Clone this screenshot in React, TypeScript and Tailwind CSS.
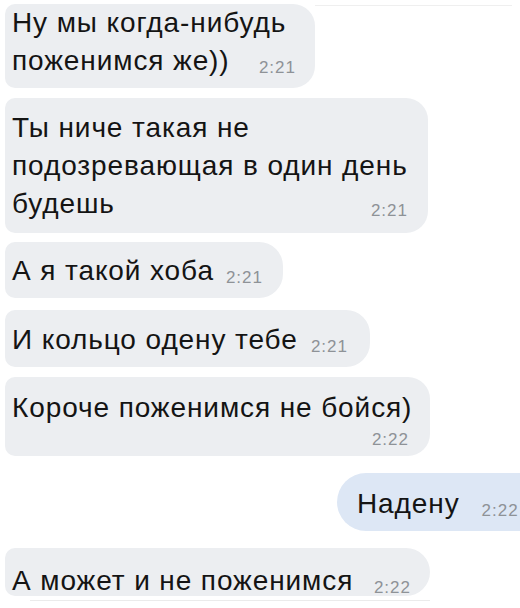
import React from "react";

const Time = ({ t, className = "" }: { t: string; className?: string }) => (
  <span
    className={
      "text-[17px] leading-[20px] tracking-[1px] text-[#8e9297] translate-y-[3px] whitespace-nowrap " +
      className
    }
  >
    {t}
  </span>
);

export default function App() {
  return (
    <div className="w-[520px] h-[608px] overflow-hidden bg-white flex flex-col items-start font-['Liberation_Sans',Arial,sans-serif] text-[28px] leading-[38px] tracking-[0.9px] text-[#141414]">
      {/* bubble 1 */}
      <div className="flex w-full items-start mt-[4px]">
        <div className="ml-[5px] w-[310px] h-[84px] bg-[#eceef1] rounded-r-[22px] rounded-l-[10px] pl-[7px] pr-[19px] pt-0 pb-[8px] whitespace-nowrap">
          <div>Ну мы когда-нибудь</div>
          <div className="flex items-baseline justify-between">
            <span>поженимся же))</span>
            <Time t="2:21" />
          </div>
        </div>
        <div className="flex-1 h-px bg-[#efefef] mt-[1px] mr-[8px]" />
      </div>

      {/* bubble 2 */}
      <div className="mt-[10px] ml-[5px] w-[423px] bg-[#eceef1] rounded-r-[22px] rounded-l-[10px] pl-[7px] pr-[20px] pt-[11px] pb-[10px] whitespace-nowrap">
        <div>Ты ниче такая не</div>
        <div>подозревающая в один день</div>
        <div className="flex items-baseline justify-between">
          <span>будешь</span>
          <Time t="2:21" />
        </div>
      </div>

      {/* bubble 3 */}
      <div className="mt-[9px] ml-[5px] w-[278px] bg-[#eceef1] rounded-r-[24px] rounded-l-[10px] pl-[7px] pr-[20px] pt-[10px] pb-[8px] whitespace-nowrap flex items-baseline justify-between">
        <span>А я такой хоба</span>
        <Time t="2:21" />
      </div>

      {/* bubble 4 */}
      <div className="mt-[12px] ml-[5px] w-[365px] bg-[#eceef1] rounded-r-[24px] rounded-l-[10px] pl-[7px] pr-[22px] pt-[11px] pb-[8px] whitespace-nowrap flex items-baseline justify-between">
        <span>И кольцо одену тебе</span>
        <Time t="2:21" />
      </div>

      {/* bubble 5 */}
      <div className="mt-[10px] ml-[5px] w-[425px] bg-[#eceef1] rounded-r-[22px] rounded-l-[10px] pl-[7px] pr-[21px] pt-[12px] pb-[9px] whitespace-nowrap">
        <div>Короче поженимся не бойся)</div>
        <div className="flex justify-end leading-[22px]">
          <Time t="2:22" className="translate-y-0" />
        </div>
      </div>

      {/* bubble 6 (outgoing) */}
      <div className="mt-[17px] self-end mr-[-20px] w-[203px] bg-[#dde7f5] rounded-l-[30px] pl-[20px] pt-[12px] pb-[8px] whitespace-nowrap flex items-baseline">
        <span>Надену</span>
        <Time t="2:22" className="ml-[22px]" />
      </div>

      {/* bubble 7 */}
      <div className="mt-[17px] ml-[5px] w-[425px] h-[48px] overflow-hidden bg-[#eceef1] rounded-r-[24px] rounded-l-[10px] pl-[7px] pr-[19px] pt-[14px] whitespace-nowrap flex items-baseline justify-between">
        <span>А может и не поженимся</span>
        <Time t="2:22" />
      </div>

      <div className="mt-[4px] ml-[30px] w-[400px] h-px bg-[#ebebeb]" />
    </div>
  );
}
